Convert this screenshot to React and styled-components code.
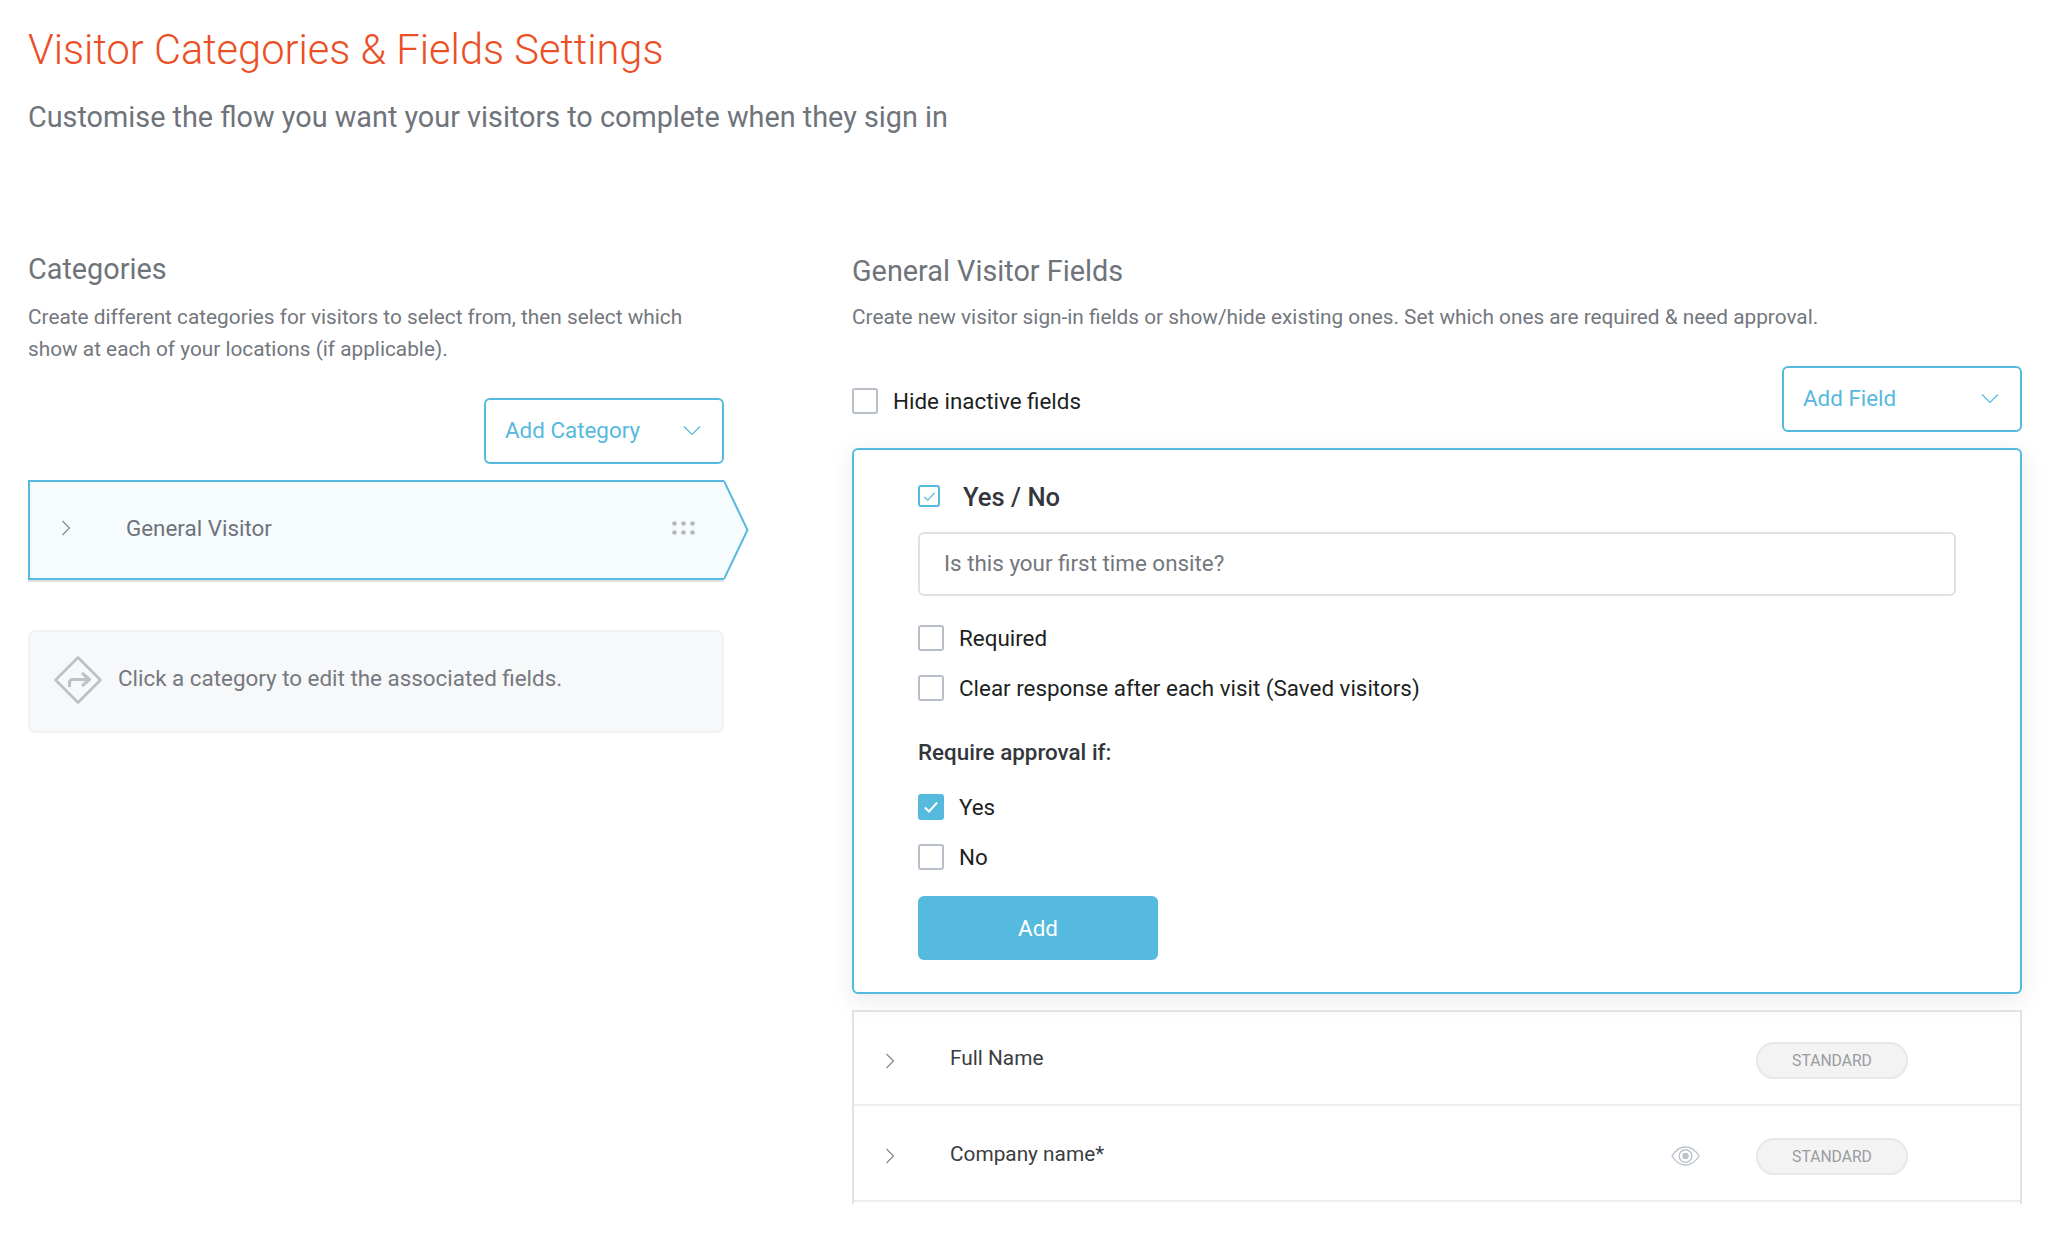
import React from 'react';
import styled, { createGlobalStyle } from 'styled-components';

const blue = '#56b9de';

const PageBody = createGlobalStyle`
  html, body {
    margin: 0;
    background: #fff;
    font-family: Roboto, "Liberation Sans", sans-serif;
  }
`;

const Page = styled.main`
  width: 2054px;
  height: 1236px;
  box-sizing: border-box;
  padding: 25px 32px 0 28px;
  overflow: hidden;
`;

const PageTitle = styled.h1`
  margin: 0;
  font-size: 41.6px;
  line-height: 50px;
  font-weight: 300;
  color: #ec4f25;
`;

const PageSubtitle = styled.p`
  margin: 24px 0 0;
  font-size: 28.8px;
  line-height: 36px;
  font-weight: 400;
  color: #6f747b;
`;

const Columns = styled.div`
  display: grid;
  grid-template-columns: 696px 1170px;
  column-gap: 128px;
  margin-top: 116px;
`;

const Column = styled.section`
  display: flex;
  flex-direction: column;
`;

const SectionTitle = styled.h2`
  margin: ${(p) => (p.$low ? '2px' : '0')} 0 0;
  font-size: 28.8px;
  line-height: 36px;
  font-weight: 400;
  color: #6f747b;
`;

const SectionText = styled.p`
  margin: ${(p) => (p.$low ? '12px' : '14px')} 0 0;
  font-size: 20.8px;
  line-height: 32px;
  color: #73777e;
`;

const DropdownButton = styled.button`
  display: flex;
  align-items: center;
  justify-content: space-between;
  box-sizing: border-box;
  width: 240px;
  height: 66px;
  padding: 0 21px 2px 19px;
  background: #fff;
  border: 2px solid ${blue};
  border-radius: 6px;
  color: ${blue};
  font-family: inherit;
  font-size: 22.4px;
  flex: none;
`;

const AddCategoryRow = styled.div`
  display: flex;
  justify-content: flex-end;
  margin-top: 33px;
`;

const CategoryItem = styled.div`
  display: flex;
  margin-top: 16px;
  margin-right: -25px;
`;

const CategoryBody = styled.div`
  display: flex;
  align-items: center;
  flex: 1;
  box-sizing: border-box;
  height: 100px;
  padding: 0 28px 4px 31px;
  background: #f6fbfe;
  border: 2px solid ${blue};
  border-right: 0;
  box-shadow: 0 2px 0 #dfe1e7;
`;

const CategoryName = styled.span`
  flex: 1;
  margin-left: 55px;
  font-size: 22.4px;
  color: #6f747b;
`;

const Hint = styled.div`
  display: flex;
  align-items: center;
  gap: 16px;
  box-sizing: border-box;
  height: 103px;
  margin-top: 50px;
  padding: 0 24px 4px 24px;
  background: #f7f8fa;
  border: 2px solid #f0f1f4;
  border-radius: 7px;
  font-size: 22.4px;
  color: #75797f;
`;

const HintText = styled.span`
  margin-bottom: 3px;
`;

const FilterRow = styled.div`
  display: flex;
  align-items: center;
  justify-content: space-between;
  margin-top: 33px;
`;

const FilterCheck = styled.div`
  padding-top: 3px;
`;

const CheckRow = styled.label`
  display: flex;
  align-items: center;
  gap: 15px;
  font-size: 22.4px;
  line-height: 26px;
  color: #1d1f22;
`;

const Box = styled.span`
  display: flex;
  align-items: center;
  justify-content: center;
  box-sizing: border-box;
  flex: none;
  width: ${(p) => p.$box}px;
  height: ${(p) => p.$box}px;
  border: 2px solid ${(p) => (p.$on || p.$outline ? blue : '#b9bfc9')};
  border-radius: 3px;
  background: ${(p) => (p.$on ? blue : '#fff')};
`;

const Panel = styled.div`
  display: flex;
  flex-direction: column;
  box-sizing: border-box;
  height: 546px;
  margin-top: 16px;
  padding: 34px 64px 0;
  background: #fff;
  border: 2px solid ${blue};
  border-radius: 6px;
  box-shadow: 0 6px 24px rgba(40, 50, 70, 0.1);
`;

const PanelHead = styled.div`
  display: flex;
  align-items: center;
  gap: 23px;
  font-size: 25.6px;
  font-weight: 500;
  line-height: 24px;
  color: #33363a;
`;

const PanelHeadText = styled.span`
  padding-top: 1px;
  margin-bottom: -1px;
`;

const TextInput = styled.div`
  display: flex;
  align-items: center;
  box-sizing: border-box;
  height: 64px;
  margin-top: 24px;
  padding: 0 24px 3px;
  border: 2px solid #e0e1e6;
  border-radius: 6px;
  font-size: 22.4px;
  color: #73777e;
`;

const Checks = styled.div`
  display: flex;
  flex-direction: column;
  gap: 24px;
  margin-top: ${(p) => p.$top}px;
`;

const ApprovalLabel = styled.div`
  margin-top: 38px;
  font-size: 22.4px;
  line-height: 26px;
  font-weight: 500;
  color: #33363a;
`;

const AddButton = styled.button`
  width: 240px;
  height: 64px;
  margin-top: 26px;
  border: 0;
  border-radius: 6px;
  background: ${blue};
  color: #fff;
  font-family: inherit;
  font-size: 22.4px;
`;

const FieldList = styled.div`
  display: flex;
  flex-direction: column;
  box-sizing: border-box;
  height: 194px;
  margin-top: 16px;
  border: 2px solid #e0e2e7;
  border-bottom: 0;
`;

const FieldRow = styled.div`
  display: flex;
  align-items: center;
  box-sizing: border-box;
  flex: none;
  height: 96px;
  padding: 6px 112px 0 31px;
  border-bottom: 2px solid #eeeef2;

  &:first-child {
    height: 94px;
    padding-top: 5px;
  }
`;

const FieldName = styled.span`
  flex: 1;
  margin: 0 0 5px 55px;
  font-size: 20.8px;
  color: #3a3d41;
`;

const Badge = styled.span`
  display: flex;
  align-items: center;
  justify-content: center;
  box-sizing: border-box;
  width: 152px;
  height: 37px;
  border: 2px solid #e8e8ea;
  border-radius: 18px;
  background: #f3f3f4;
  font-size: 15.7px;
  color: #9a9ba1;
`;

const EyeSlot = styled.span`
  display: flex;
  margin-right: 56px;
`;

const Chevron = ({ color = '#83878e' }) => (
  <svg width="10" height="16" viewBox="0 0 10 16" fill="none" stroke={color} strokeWidth="1.2">
    <path d="M1.5 1 L8.5 8 L1.5 15" />
  </svg>
);

const ChevronDown = () => (
  <svg width="18" height="11" viewBox="0 0 18 11" fill="none" stroke={blue} strokeWidth="1.2">
    <path d="M1 1.5 L9 9.5 L17 1.5" />
  </svg>
);

const Tick = ({ color, size, weight = 1.8 }) => (
  <svg width={size} height={size} viewBox="0 0 16 16" fill="none" stroke={color} strokeWidth={weight}>
    <path d="M2.5 8.5 L6.2 12 L13.5 4" />
  </svg>
);

const Dots = () => (
  <svg width="24" height="14" viewBox="0 0 24 14" fill="#b4b7bc">
    {[2.5, 11.5, 20.5].map((x) => (
      <React.Fragment key={x}>
        <circle cx={x} cy="2.5" r="2.3" />
        <circle cx={x} cy="11.5" r="2.3" />
      </React.Fragment>
    ))}
  </svg>
);

const CategoryTip = () => (
  <svg width="25" height="100" viewBox="0 0 25 100">
    <polygon points="0,1 23.5,50 0,99" fill="#f6fbfe" />
    <polyline points="0,1 23.5,50 0,99" fill="none" stroke={blue} strokeWidth="2" />
  </svg>
);

const TurnSign = () => (
  <svg width="48" height="48" viewBox="0 0 48 48" fill="none" stroke="#bcc1c8" strokeWidth="2.6" strokeLinejoin="round">
    <path d="M24 1.5 L46.5 24 L24 46.5 L1.5 24 Z" />
    <path d="M15.5 31 V27 Q15.5 23.5 19 23.5 H35" strokeWidth="3" />
    <path d="M28 17 L35.5 23.5 L28 30" strokeWidth="3" />
  </svg>
);

const Eye = () => (
  <svg width="29" height="20" viewBox="0 0 29 20" fill="none" stroke="#bcc2cb" strokeWidth="1.4">
    <path d="M1 10 C5 3.5 9.5 1 14.5 1 C19.5 1 24 3.5 28 10 C24 16.5 19.5 19 14.5 19 C9.5 19 5 16.5 1 10 Z" />
    <circle cx="14.5" cy="10" r="6.3" />
    <circle cx="14.5" cy="10" r="3.2" fill="#bcc2cb" stroke="none" />
  </svg>
);

const Check = ({ label, checked }) => (
  <CheckRow>
    <Box $box={26} $on={checked}>
      {checked && <Tick color="#fff" size={18} />}
    </Box>
    {label}
  </CheckRow>
);

const fields = [
  { name: 'Full Name' },
  { name: 'Company name*', eye: true },
];

export default function App() {
  return (
    <>
      <PageBody />
      <Page>
        <PageTitle>Visitor Categories &amp; Fields Settings</PageTitle>
        <PageSubtitle>Customise the flow you want your visitors to complete when they sign in</PageSubtitle>
        <Columns>
          <Column>
            <SectionTitle>Categories</SectionTitle>
            <SectionText>
              Create different categories for visitors to select from, then select which<br />
              show at each of your locations (if applicable).
            </SectionText>
            <AddCategoryRow>
              <DropdownButton>
                Add Category
                <ChevronDown />
              </DropdownButton>
            </AddCategoryRow>
            <CategoryItem>
              <CategoryBody>
                <Chevron />
                <CategoryName>General Visitor</CategoryName>
                <Dots />
              </CategoryBody>
              <CategoryTip />
            </CategoryItem>
            <Hint>
              <TurnSign />
              <HintText>Click a category to edit the associated fields.</HintText>
            </Hint>
          </Column>
          <Column>
            <SectionTitle $low>General Visitor Fields</SectionTitle>
            <SectionText $low>
              Create new visitor sign-in fields or show/hide existing ones. Set which ones are required &amp; need approval.
            </SectionText>
            <FilterRow>
              <FilterCheck>
                <Check label="Hide inactive fields" />
              </FilterCheck>
              <DropdownButton>
                Add Field
                <ChevronDown />
              </DropdownButton>
            </FilterRow>
            <Panel>
              <PanelHead>
                <Box $box={22} $outline>
                  <Tick color={blue} size={15} weight={1.2} />
                </Box>
                <PanelHeadText>Yes / No</PanelHeadText>
              </PanelHead>
              <TextInput>Is this your first time onsite?</TextInput>
              <Checks $top={29}>
                <Check label="Required" />
                <Check label="Clear response after each visit (Saved visitors)" />
              </Checks>
              <ApprovalLabel>Require approval if:</ApprovalLabel>
              <Checks $top={29}>
                <Check label="Yes" checked />
                <Check label="No" />
              </Checks>
              <AddButton>Add</AddButton>
            </Panel>
            <FieldList>
              {fields.map((field) => (
                <FieldRow key={field.name}>
                  <Chevron />
                  <FieldName>{field.name}</FieldName>
                  {field.eye && (
                    <EyeSlot>
                      <Eye />
                    </EyeSlot>
                  )}
                  <Badge>STANDARD</Badge>
                </FieldRow>
              ))}
            </FieldList>
          </Column>
        </Columns>
      </Page>
    </>
  );
}
